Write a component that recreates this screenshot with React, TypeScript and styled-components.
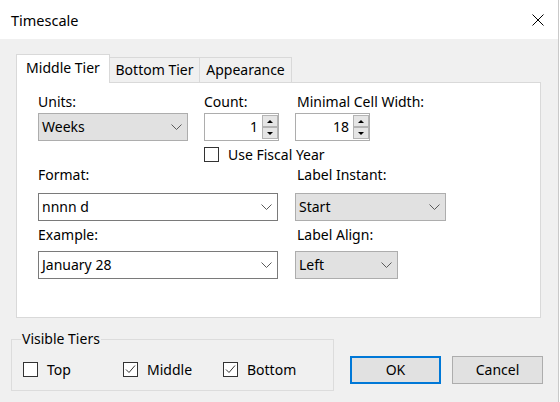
import React from "react";
import styled, { createGlobalStyle } from "styled-components";

const GlobalStyle = createGlobalStyle`
  html, body {
    margin: 0;
    padding: 0;
    background: #ffffff;
  }
  body {
    font-family: "Segoe UI", "Noto Sans", "Open Sans", sans-serif;
    font-size: 14px;
    color: #000;
  }
  * { box-sizing: border-box; }
`;

const Window = styled.div`
  width: 559px;
  height: 402px;
  background: #f0f0f0;
  border-right: 1px solid #c9c9c9;
  display: flex;
  flex-direction: column;
`;

const TitleBar = styled.div`
  height: 39px;
  background: #ffffff;
  display: flex;
  align-items: center;
  justify-content: space-between;
  padding: 0 14px 0 11px;
`;

const Title = styled.div`
  font-size: 14.5px;
  line-height: 20px;
`;

const CloseIcon = () => (
  <svg width="12" height="12" viewBox="0 0 12 12">
    <path d="M0.5 0.5 L11.5 11.5 M11.5 0.5 L0.5 11.5" stroke="#000" strokeWidth="1" fill="none" />
  </svg>
);

const Body = styled.div`
  padding: 15px 0 0 16px;
  display: flex;
  flex-direction: column;
`;

const TabStrip = styled.div`
  display: flex;
  align-items: flex-end;
  height: 28px;
`;

const Tab = styled.div<{ $active?: boolean; $w: number }>`
  width: ${(p) => p.$w}px;
  height: ${(p) => (p.$active ? 29 : 25)}px;
  margin-bottom: ${(p) => (p.$active ? -1 : 0)}px;
  background: ${(p) => (p.$active ? "#ffffff" : "#f0f0f0")};
  border: 1px solid #d9d9d9;
  border-bottom: none;
  border-left: ${(p) => (p.$active ? "1px solid #d9d9d9" : "none")};
  position: relative;
  z-index: ${(p) => (p.$active ? 1 : 0)};
  display: flex;
  align-items: center;
  justify-content: center;
  line-height: 18px;
  padding-bottom: ${(p) => (p.$active ? 2 : 0)}px;
`;

const Panel = styled.div`
  width: 525px;
  height: 236px;
  background: #ffffff;
  border: 1px solid #d9d9d9;
  padding: 10px 0 0 21px;
`;

const Grid = styled.div`
  display: grid;
  grid-template-columns: 166px 91px 1fr;
  grid-template-rows: 18px 2px 28px 6px 15px 4px 18px 9px 28px 5px 18px 7px 28px;
  grid-template-areas:
    "units count mcw"
    ". . ."
    "unitsC countC mcwC"
    ". . ."
    ". fiscal fiscal"
    ". . ."
    "format format instant"
    ". . ."
    "formatC formatC instantC"
    ". . ."
    "example example align"
    ". . ."
    "exampleC exampleC alignC";
`;

const Label = styled.div<{ $area: string; $indent?: number }>`
  grid-area: ${(p) => p.$area};
  line-height: 18px;
  padding-left: ${(p) => p.$indent ?? 0}px;
  white-space: nowrap;
`;

const Combo = styled.div<{ $area: string; $w: number; $edit?: boolean }>`
  grid-area: ${(p) => p.$area};
  width: ${(p) => p.$w}px;
  height: 28px;
  background: ${(p) => (p.$edit ? "#ffffff" : "#e1e1e1")};
  border: 1px solid ${(p) => (p.$edit ? "#7a7a7a" : "#adadad")};
  display: flex;
  align-items: center;
  justify-content: space-between;
  padding: 0 5px 0 3px;
  line-height: 18px;
`;

const Chevron = () => (
  <svg width="11" height="6" viewBox="0 0 11 6">
    <polyline points="0.5,0.5 5.5,5.5 10.5,0.5" stroke="#5a5a5a" strokeWidth="1" fill="none" />
  </svg>
);

const SpinBox = styled.div<{ $area: string }>`
  grid-area: ${(p) => p.$area};
  width: 75px;
  height: 28px;
  background: #ffffff;
  border: 1px solid #adadad;
  display: flex;
`;

const SpinValue = styled.div`
  flex: 1;
  display: flex;
  align-items: center;
  justify-content: flex-end;
  padding-right: 4px;
  line-height: 18px;
`;

const SpinButtons = styled.div`
  width: 16px;
  display: flex;
  flex-direction: column;
  padding: 1px 0;
`;

const SpinButton = styled.div`
  flex: 1;
  background: #e5e5e5;
  border: 1px solid #b4b4b4;
  display: flex;
  align-items: center;
  justify-content: center;
`;

const Arrow = styled.span<{ $down?: boolean }>`
  width: 0;
  height: 0;
  border-left: 3px solid transparent;
  border-right: 3px solid transparent;
  ${(p) => (p.$down ? "border-top: 3px solid #000;" : "border-bottom: 3px solid #000;")}
`;

const CheckRow = styled.label<{ $area?: string; $w?: number }>`
  ${(p) => (p.$area ? `grid-area: ${p.$area};` : "")}
  ${(p) => (p.$w ? `width: ${p.$w}px;` : "")}
  display: flex;
  align-items: center;
  gap: 9px;
  height: 15px;
  line-height: 18px;
  white-space: nowrap;
`;

const Box = styled.span`
  width: 15px;
  height: 15px;
  border: 1px solid #333333;
  background: #ffffff;
  display: flex;
  align-items: center;
  justify-content: center;
  flex: none;
`;

const CheckMark = () => (
  <svg width="13" height="13" viewBox="0 0 13 13">
    <polyline points="2,6.5 5,9.5 11,2.5" stroke="#333" strokeWidth="1" fill="none" />
  </svg>
);

const CheckBox = ({ checked, label, area, w }: { checked?: boolean; label: string; area?: string; w?: number }) => (
  <CheckRow $area={area} $w={w}>
    <Box>{checked && <CheckMark />}</Box>
    <span>{label}</span>
  </CheckRow>
);

const Footer = styled.div`
  display: flex;
  align-items: flex-start;
  padding-left: 11px;
  margin-top: 12px;
`;

const Group = styled.fieldset`
  margin: 0 16px 0 0;
  width: 323px;
  min-inline-size: 0;
  border: 1px solid #dcdcdc;
  padding: 14px 0 13px 11px;
  display: flex;
`;

const Legend = styled.legend`
  padding: 0 1px;
  margin-left: -2px;
  line-height: 18px;
`;

const Button = styled.button<{ $primary?: boolean }>`
  width: 91px;
  height: 28px;
  margin-top: 26px;
  margin-right: 11px;
  padding: 0;
  font-family: inherit;
  font-size: 14px;
  color: #000;
  background: #e1e1e1;
  border: ${(p) => (p.$primary ? "2px solid #0078d7" : "1px solid #adadad")};
  line-height: 18px;
`;

export default function App() {
  return (
    <>
      <GlobalStyle />
      <Window>
        <TitleBar>
          <Title>Timescale</Title>
          <CloseIcon />
        </TitleBar>
        <Body>
          <TabStrip>
            <Tab $active $w={94}>Middle Tier</Tab>
            <Tab $w={90}>Bottom Tier</Tab>
            <Tab $w={92}>Appearance</Tab>
          </TabStrip>
          <Panel>
            <Grid>
              <Label $area="units">Units:</Label>
              <Label $area="count">Count:</Label>
              <Label $area="mcw" $indent={2}>Minimal Cell Width:</Label>

              <Combo $area="unitsC" $w={150}>
                <span>Weeks</span>
                <Chevron />
              </Combo>
              <SpinBox $area="countC">
                <SpinValue>1</SpinValue>
                <SpinButtons>
                  <SpinButton><Arrow /></SpinButton>
                  <SpinButton><Arrow $down /></SpinButton>
                </SpinButtons>
              </SpinBox>
              <SpinBox $area="mcwC">
                <SpinValue>18</SpinValue>
                <SpinButtons>
                  <SpinButton><Arrow /></SpinButton>
                  <SpinButton><Arrow $down /></SpinButton>
                </SpinButtons>
              </SpinBox>

              <CheckBox area="fiscal" label="Use Fiscal Year" />

              <Label $area="format">Format:</Label>
              <Label $area="instant" $indent={2}>Label Instant:</Label>

              <Combo $area="formatC" $w={240} $edit>
                <span>nnnn d</span>
                <Chevron />
              </Combo>
              <Combo $area="instantC" $w={151}>
                <span>Start</span>
                <Chevron />
              </Combo>

              <Label $area="example">Example:</Label>
              <Label $area="align" $indent={2}>Label Align:</Label>

              <Combo $area="exampleC" $w={240} $edit>
                <span>January 28</span>
                <Chevron />
              </Combo>
              <Combo $area="alignC" $w={103}>
                <span>Left</span>
                <Chevron />
              </Combo>
            </Grid>
          </Panel>
        </Body>
        <Footer>
          <Group>
            <Legend>Visible Tiers</Legend>
            <CheckBox w={100} label="Top" />
            <CheckBox w={100} checked label="Middle" />
            <CheckBox w={100} checked label="Bottom" />
          </Group>
          <Button $primary>OK</Button>
          <Button>Cancel</Button>
        </Footer>
      </Window>
    </>
  );
}
